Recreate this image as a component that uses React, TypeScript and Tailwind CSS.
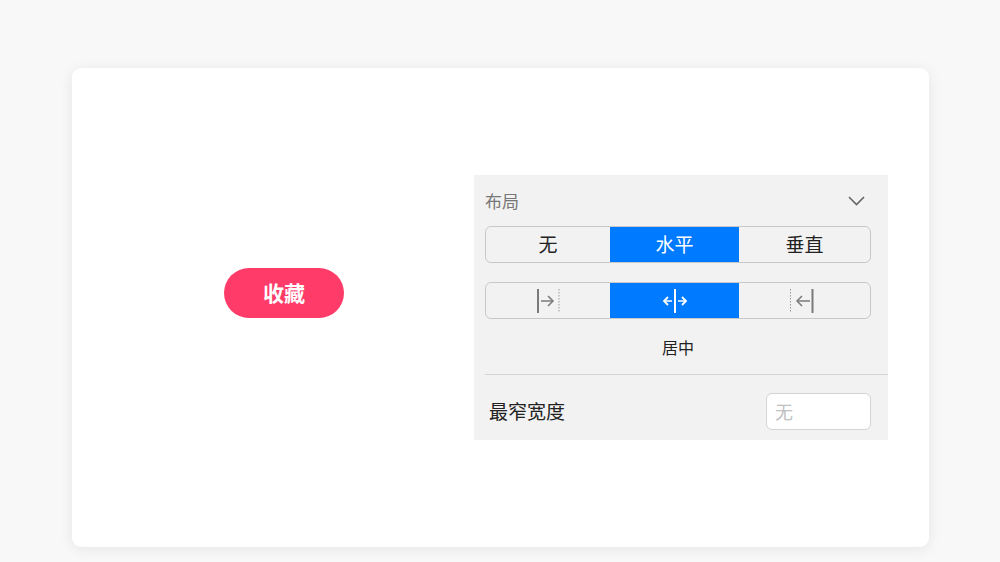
const cjk = { fontFamily: '"Noto Sans CJK SC", "Noto Sans", sans-serif' };

const AlignStart = () => (
  <svg width="26" height="26" viewBox="0 0 26 26" fill="none">
    <line x1="3" y1="1" x2="3" y2="25" stroke="#7a7a7a" strokeWidth="2" />
    <line x1="6" y1="13" x2="18" y2="13" stroke="#7a7a7a" strokeWidth="1.5" />
    <polyline points="13,8 18,13 13,18" stroke="#7a7a7a" strokeWidth="1.5" fill="none" />
    <line x1="24" y1="1" x2="24" y2="25" stroke="#9a9a9a" strokeWidth="1" strokeDasharray="1.5 1.5" />
  </svg>
);

const AlignCenter = () => (
  <svg width="26" height="26" viewBox="0 0 26 26" fill="none">
    <line x1="13" y1="1" x2="13" y2="25" stroke="#fff" strokeWidth="2" />
    <line x1="2" y1="13" x2="10" y2="13" stroke="#fff" strokeWidth="1.5" />
    <polyline points="6,9 2,13 6,17" stroke="#fff" strokeWidth="1.8" fill="none" />
    <line x1="16" y1="13" x2="24" y2="13" stroke="#fff" strokeWidth="1.5" />
    <polyline points="20,9 24,13 20,17" stroke="#fff" strokeWidth="1.8" fill="none" />
  </svg>
);

const AlignEnd = () => (
  <svg width="26" height="26" viewBox="0 0 26 26" fill="none" className="mr-[5px]">
    <line x1="1.5" y1="1" x2="1.5" y2="25" stroke="#9a9a9a" strokeWidth="1" strokeDasharray="1.5 1.5" />
    <line x1="8" y1="13" x2="21" y2="13" stroke="#7a7a7a" strokeWidth="1.5" />
    <polyline points="13,8 8,13 13,18" stroke="#7a7a7a" strokeWidth="1.5" fill="none" />
    <line x1="23.5" y1="1" x2="23.5" y2="25" stroke="#7a7a7a" strokeWidth="2" />
  </svg>
);

const Segmented = ({ items }: { items: React.ReactNode[] }) => (
  <div className="grid grid-cols-[124fr_129fr_131fr] h-[37px] rounded-[6px] border-[1.5px] border-[#c8c8c8] overflow-hidden bg-[#f2f2f2]">
    {items.map((item, i) => (
      <div
        key={i}
        className={`flex items-center justify-center text-[19px] ${i === 1 ? "bg-[#007aff] text-white" : "text-[#222]"}`}
      >
        {item}
      </div>
    ))}
  </div>
);

export default function App() {
  return (
    <div className="min-h-[562px] w-[1000px] bg-[#f8f8f8] pt-[68px]" style={cjk}>
      <div className="ml-[72px] w-[857px] h-[479px] bg-white rounded-[9px] shadow-[0_2px_14px_rgba(0,0,0,0.08)] flex items-start">
        <button className="ml-[152px] mt-[200px] w-[120px] h-[50px] rounded-full bg-[#fe3b69] text-white text-[21px] font-bold">
          收藏
        </button>
        <div className="ml-[130px] mt-[107px] w-[414px] bg-[#f2f2f2] pl-[11px]">
          <div className="h-[51px] flex items-center justify-between pr-[23px]">
            <span className="text-[17px] text-[#777]">布局</span>
            <svg width="17" height="10" viewBox="0 0 17 10" fill="none">
              <polyline points="1,1 8.5,8.5 16,1" stroke="#666" strokeWidth="1.6" fill="none" />
            </svg>
          </div>
          <div className="pr-[17px]">
            <Segmented items={["无", "水平", "垂直"]} />
            <div className="mt-[19px]">
              <Segmented items={[<AlignStart key="a" />, <AlignCenter key="b" />, <AlignEnd key="c" />]} />
            </div>
            <div className="h-[55px] flex items-center justify-center text-[16px] text-[#222]">居中</div>
          </div>
          <div className="h-px bg-[#d4d4d4]" />
          <div className="flex items-center justify-between pl-[4px] pr-[17px] pt-[18px] pb-[10px]">
            <span className="text-[19px] text-[#222]">最窄宽度</span>
            <div className="w-[105px] h-[37px] bg-white border-[1.5px] border-[#d4d4d4] rounded-[6px] flex items-center pl-[8px] text-[18px] text-[#c0c0c0]">
              无
            </div>
          </div>
        </div>
      </div>
    </div>
  );
}
